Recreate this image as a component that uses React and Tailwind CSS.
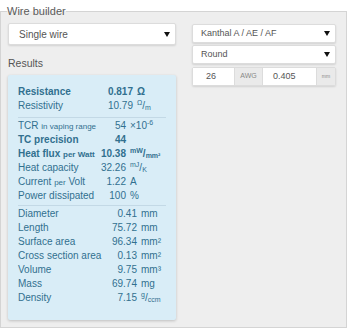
import React from "react";

function Arrow() {
  return (
    <svg width="6" height="5" viewBox="0 0 6 5" className="shrink-0">
      <path d="M0 0 H6 L3 5 Z" fill="#111" />
    </svg>
  );
}

function Select({ children, h, text, pl }) {
  return (
    <div
      className={`flex items-center justify-between bg-white rounded-[2px] border border-[#dcdcdc] shadow-[0_1px_2px_rgba(0,0,0,0.12)] pr-[5px] text-[#555] ${h} ${text} ${pl}`}
    >
      <span>{children}</span>
      <Arrow />
    </div>
  );
}

function Row({ label, num, unit, bold, cols }) {
  return (
    <div className={`flex h-[14px] items-center whitespace-nowrap ${bold ? "font-bold" : ""}`}>
      <div className={`${cols[0]} shrink-0`}>{label}</div>
      <div className={`${cols[1]} shrink-0 text-right`}>{num}</div>
      <div className="pl-[4px]">{unit}</div>
    </div>
  );
}

function Frac({ a, b }) {
  return (
    <span>
      <sup className="text-[7px]">{a}</sup>/<sub className="text-[7px]">{b}</sub>
    </span>
  );
}

export default function App() {
  const c1 = ["w-[85px]", "w-[30px]"];
  const c2 = ["w-[78px]", "w-[30px]"];
  const c3 = ["w-[89px]", "w-[30px]"];
  return (
    <div className="w-[349px] h-[334px] bg-white pt-[5px] font-['Liberation_Sans',Arial,sans-serif]">
      <fieldset className="w-[347px] h-[323px] border border-[#d4d4d4] bg-[#eeeeee] px-[7px] pt-[5px]">
        <legend className="ml-[-1px] text-[11px] leading-[13px] text-[#5a5a5a]">Wire builder</legend>
        <div className="flex gap-[16px]">
          <div className="w-[168px] flex flex-col">
            <Select h="h-[22px]" text="text-[10px]" pl="pl-[10px]">Single wire</Select>
            <div className="mt-[12px] h-[12px] leading-[12px] text-[10.5px] text-[#555]">Results</div>
            <div className="mt-[6px] h-[245px] bg-[#d9edf7] rounded-[2px] shadow-[0_1px_3px_rgba(0,0,0,0.2)] pt-[9px] px-[10px] text-[10px] text-[#31708f]">
              <Row cols={c1} bold label="Resistance" num="0.817" unit="Ω" />
              <Row cols={c1} label="Resistivity" num="10.79" unit={<Frac a="Ω" b="m" />} />
              <div className="mt-[5px] border-t border-[#c3d9e6]" />
              <Row
                cols={c2}
                label={<>TCR <span className="text-[8px]">in vaping range</span></>}
                num="54"
                unit={<>×10<sup className="text-[7px]">-6</sup></>}
              />
              <Row cols={c2} bold label="TC precision" num="44" unit="" />
              <Row
                cols={c2}
                bold
                label={<>Heat flux <span className="text-[8px]">per Watt</span></>}
                num="10.38"
                unit={<Frac a="mW" b="mm²" />}
              />
              <Row cols={c2} label="Heat capacity" num="32.26" unit={<Frac a="mJ" b="K" />} />
              <Row cols={c2} label={<>Current <span className="text-[8px]">per</span> Volt</>} num="1.22" unit="A" />
              <Row cols={c2} label="Power dissipated" num="100" unit="%" />
              <div className="mt-[3px] border-t border-[#c3d9e6]" />
              <Row cols={c3} label="Diameter" num="0.41" unit="mm" />
              <Row cols={c3} label="Length" num="75.72" unit="mm" />
              <Row cols={c3} label="Surface area" num="96.34" unit="mm²" />
              <Row cols={c3} label="Cross section area" num="0.13" unit="mm²" />
              <Row cols={c3} label="Volume" num="9.75" unit="mm³" />
              <Row cols={c3} label="Mass" num="69.74" unit="mg" />
              <Row cols={c3} label="Density" num="7.15" unit={<Frac a="g" b="ccm" />} />
            </div>
          </div>
          <div className="w-[144px] pt-[1px] flex flex-col gap-[2px]">
            <Select h="h-[19px]" text="text-[9px]" pl="pl-[8px]">Kanthal A / AE / AF</Select>
            <Select h="h-[19px]" text="text-[9px]" pl="pl-[8px]">Round</Select>
            <div className="mt-[1px] flex h-[19px] rounded-[2px] border border-[#dcdcdc] shadow-[0_1px_2px_rgba(0,0,0,0.12)] text-[9px] text-[#555]">
              <div className="w-[41px] bg-white flex items-center pl-[13px]">26</div>
              <div className="w-[29px] bg-[#eaeaea] border-x border-[#dcdcdc] flex items-center justify-center text-[7px] text-[#888]">AWG</div>
              <div className="w-[53px] bg-white flex items-center pl-[10px]">0.405</div>
              <div className="flex-1 bg-[#eaeaea] border-l border-[#dcdcdc] flex items-center justify-center text-[5px] text-[#888]">mm</div>
            </div>
          </div>
        </div>
      </fieldset>
    </div>
  );
}
